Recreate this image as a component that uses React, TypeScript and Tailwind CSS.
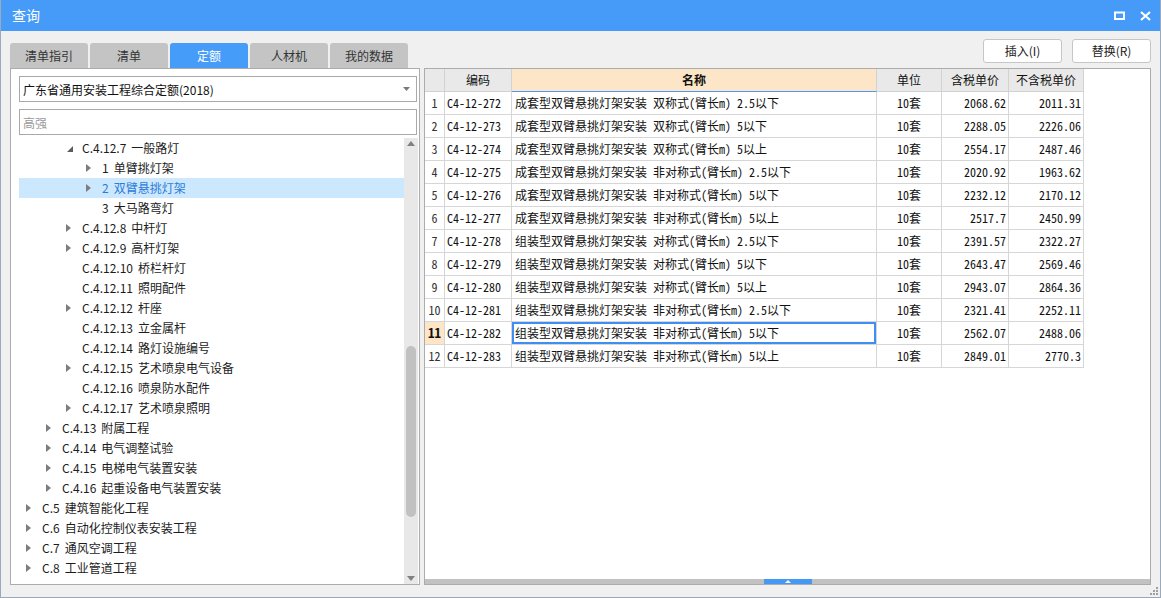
import React from 'react';

type Node = { l: 2 | 3 | 4 | 5; a?: 'open' | 'closed'; t: string; sel?: boolean };

const tree: Node[] = [
  { l: 4, a: 'open', t: 'C.4.12.7 一般路灯' },
  { l: 5, a: 'closed', t: '1 单臂挑灯架' },
  { l: 5, a: 'closed', t: '2 双臂悬挑灯架', sel: true },
  { l: 5, t: '3 大马路弯灯' },
  { l: 4, a: 'closed', t: 'C.4.12.8 中杆灯' },
  { l: 4, a: 'closed', t: 'C.4.12.9 高杆灯架' },
  { l: 4, t: 'C.4.12.10 桥栏杆灯' },
  { l: 4, t: 'C.4.12.11 照明配件' },
  { l: 4, a: 'closed', t: 'C.4.12.12 杆座' },
  { l: 4, t: 'C.4.12.13 立金属杆' },
  { l: 4, t: 'C.4.12.14 路灯设施编号' },
  { l: 4, a: 'closed', t: 'C.4.12.15 艺术喷泉电气设备' },
  { l: 4, t: 'C.4.12.16 喷泉防水配件' },
  { l: 4, a: 'closed', t: 'C.4.12.17 艺术喷泉照明' },
  { l: 3, a: 'closed', t: 'C.4.13 附属工程' },
  { l: 3, a: 'closed', t: 'C.4.14 电气调整试验' },
  { l: 3, a: 'closed', t: 'C.4.15 电梯电气装置安装' },
  { l: 3, a: 'closed', t: 'C.4.16 起重设备电气装置安装' },
  { l: 2, a: 'closed', t: 'C.5 建筑智能化工程' },
  { l: 2, a: 'closed', t: 'C.6 自动化控制仪表安装工程' },
  { l: 2, a: 'closed', t: 'C.7 通风空调工程' },
  { l: 2, a: 'closed', t: 'C.8 工业管道工程' },
];

const indent: Record<number, string> = {
  2: 'pl-[7px]',
  3: 'pl-[27px]',
  4: 'pl-[47px]',
  5: 'pl-[67px]',
};

const rows = [
  ['C4-12-272', '成套型双臂悬挑灯架安装 双称式(臂长m) 2.5以下', '2068.62', '2011.31'],
  ['C4-12-273', '成套型双臂悬挑灯架安装 双称式(臂长m) 5以下', '2288.05', '2226.06'],
  ['C4-12-274', '成套型双臂悬挑灯架安装 双称式(臂长m) 5以上', '2554.17', '2487.46'],
  ['C4-12-275', '成套型双臂悬挑灯架安装 非对称式(臂长m) 2.5以下', '2020.92', '1963.62'],
  ['C4-12-276', '成套型双臂悬挑灯架安装 非对称式(臂长m) 5以下', '2232.12', '2170.12'],
  ['C4-12-277', '成套型双臂悬挑灯架安装 非对称式(臂长m) 5以上', '2517.7', '2450.99'],
  ['C4-12-278', '组装型双臂悬挑灯架安装 对称式(臂长m) 2.5以下', '2391.57', '2322.27'],
  ['C4-12-279', '组装型双臂悬挑灯架安装 对称式(臂长m) 5以下', '2643.47', '2569.46'],
  ['C4-12-280', '组装型双臂悬挑灯架安装 对称式(臂长m) 5以上', '2943.07', '2864.36'],
  ['C4-12-281', '组装型双臂悬挑灯架安装 非对称式(臂长m) 2.5以下', '2321.41', '2252.11'],
  ['C4-12-282', '组装型双臂悬挑灯架安装 非对称式(臂长m) 5以下', '2562.07', '2488.06'],
  ['C4-12-283', '组装型双臂悬挑灯架安装 非对称式(臂长m) 5以上', '2849.01', '2770.3'],
];

const tabs = ['清单指引', '清单', '定额', '人材机', '我的数据'];

const ui = 'font-["Noto_Sans_CJK_SC","Microsoft_YaHei",sans-serif]';
const mono = 'font-["Noto_Sans_Mono_CJK_SC","Noto_Sans_CJK_SC",monospace]';

function Arrow({ kind }: { kind?: 'open' | 'closed' }) {
  if (kind === 'open')
    return (
      <svg width="6" height="6" viewBox="0 0 6 6" className="ml-[1px] mt-[2px]">
        <polygon points="6,0 6,6 0,6" fill="#5c5c5c" />
      </svg>
    );
  if (kind === 'closed')
    return (
      <svg width="5" height="8" viewBox="0 0 5 8">
        <polygon points="0,0 5,4 0,8" fill="#7d7d7d" />
      </svg>
    );
  return null;
}

function Label({ t }: { t: string }) {
  const i = t.indexOf(' ');
  return (
    <span className="text-[12px] whitespace-nowrap flex gap-[5px]">
      <span>{t.slice(0, i)}</span>
      <span>{t.slice(i + 1)}</span>
    </span>
  );
}

export default function App() {
  return (
    <div className={`w-[1161px] h-[598px] flex flex-col bg-[#f0f0f0] border border-[#9aa9bb] border-t-0 overflow-hidden relative ${ui}`}>
      {/* title bar */}
      <div className="h-[31px] bg-[#469bf8] flex items-center justify-between pl-[12px] pr-[10px] -mx-[1px]">
        <span className="text-white text-[14px]">查询</span>
        <div className="flex items-center gap-[15px]">
          <svg width="11" height="9" viewBox="0 0 11 9">
            <rect x="1" y="1.5" width="9" height="6.5" fill="none" stroke="#fff" strokeWidth="2" />
          </svg>
          <svg width="11" height="10" viewBox="0 0 11 10">
            <path d="M1 1 L10 9 M10 1 L1 9" stroke="#fff" strokeWidth="2.2" />
          </svg>
        </div>
      </div>

      <div className="flex-1 flex flex-col px-[9px] pb-[12px] min-h-0">
        {/* tabs + buttons */}
        <div className="h-[37px] flex justify-between">
          <div className="flex gap-[2px] items-end">
            {tabs.map((t) => (
              <div
                key={t}
                className={`w-[78px] h-[25px] rounded-t-[3px] flex items-center justify-center text-[12px] ${
                  t === '定额' ? 'bg-[#469cf9] text-white' : 'bg-[#c4c4c4] text-[#333]'
                }`}
              >
                {t}
              </div>
            ))}
          </div>
          <div className="flex gap-[10px] pt-[8px]">
            {['插入(I)', '替换(R)'].map((b) => (
              <div
                key={b}
                className="w-[79px] h-[24px] bg-white border border-[#c6c6c6] rounded-[3px] flex items-center justify-center text-[12px] text-[#222]"
              >
                {b}
              </div>
            ))}
          </div>
        </div>

        {/* panels */}
        <div className="flex-1 flex gap-[4px] min-h-0">
          {/* left */}
          <div className="w-[410px] bg-white border border-[#acacac] flex flex-col pt-[7px] pl-[8px] pr-[1px] min-h-0">
            <div className="h-[26px] mr-[1px] border border-[#a9a9a9] flex items-center justify-between pl-[3px] pr-[6px] text-[12px] text-[#111]">
              <span className="mt-[1px]">广东省通用安装工程综合定额(2018)</span>
              <svg width="7" height="4" viewBox="0 0 7 4">
                <polygon points="0,0 7,0 3.5,4" fill="#7a7a7a" />
              </svg>
            </div>
            <div className="h-[26px] mt-[7px] mr-[1px] border border-[#a9a9a9] flex items-center pl-[3px] text-[12px] text-[#9a9a9a]">
              <span className="mt-[1px]">高强</span>
            </div>
            <div className="flex-1 flex mt-[3px] min-h-0">
              <div className="flex-1 overflow-hidden">
                {tree.map((n) => (
                  <div
                    key={n.t}
                    className={`h-[20px] flex items-center ${indent[n.l]} ${n.sel ? 'bg-[#cce8ff] text-[#2d7bd6]' : 'text-[#1c1c1c]'}`}
                  >
                    <div className="w-[16px] flex items-center">
                      <Arrow kind={n.a} />
                    </div>
                    <Label t={n.t} />
                  </div>
                ))}
              </div>
              {/* scrollbar */}
              <div className="w-[14px] bg-[#e8e8e8] flex flex-col items-center">
                <svg width="8" height="5" viewBox="0 0 8 5" className="mt-[3px]">
                  <polygon points="0,5 8,5 4,0" fill="#808080" />
                </svg>
                <div className="mt-[200px] w-[10px] h-[171px] rounded-full bg-[#c1c1c1]" />
                <div className="flex-1" />
                <svg width="8" height="5" viewBox="0 0 8 5" className="mb-[3px]">
                  <polygon points="0,0 8,0 4,5" fill="#808080" />
                </svg>
              </div>
            </div>
          </div>

          {/* right */}
          <div className="flex-1 bg-white border border-[#acacac] flex flex-col min-h-0">
            <div className="grid grid-cols-[20px_67px_365px_65px_67px_75px] w-[659px] text-[12px] text-[#111]">
              <div className="h-[23px] bg-[#e9e9e9] border-r border-b border-[#d2d2d2]" />
              <div className="h-[23px] bg-[#e9e9e9] border-r border-b border-[#d2d2d2] flex items-center justify-center">编码</div>
              <div className="h-[23px] bg-[#fde6c8] border-r border-[#d2d2d2] border-b border-b-[#4a9af5] flex items-center justify-center font-bold">名称</div>
              <div className="h-[23px] bg-[#e9e9e9] border-r border-b border-[#d2d2d2] flex items-center justify-center">单位</div>
              <div className="h-[23px] bg-[#e9e9e9] border-r border-b border-[#d2d2d2] flex items-center justify-center">含税单价</div>
              <div className="h-[23px] bg-[#e9e9e9] border-r border-b border-[#d2d2d2] flex items-center justify-center">不含税单价</div>
              {rows.map((r, i) => {
                const active = i === 10;
                return (
                  <React.Fragment key={r[0]}>
                    <div
                      className={`h-[23px] border-r border-b border-[#d6d6d6] flex items-center justify-center ${mono} ${
                        active ? 'bg-[#fde5c6] font-bold text-[13px]' : 'text-[#333]'
                      }`}
                    >
                      {i + 1}
                    </div>
                    <div className={`h-[23px] border-r border-b border-[#d6d6d6] flex items-center pl-[2px] whitespace-nowrap ${mono}`}>{r[0]}</div>
                    <div
                      className={`h-[23px] border-r border-b border-[#d6d6d6] flex items-center pl-[3px] whitespace-nowrap ${mono} ${
                        active ? 'shadow-[inset_0_0_0_2px_#3f8ff2]' : ''
                      }`}
                    >
                      {r[1]}
                    </div>
                    <div className={`h-[23px] border-r border-b border-[#d6d6d6] flex items-center justify-center ${mono}`}>10套</div>
                    <div className={`h-[23px] border-r border-b border-[#d6d6d6] flex items-center justify-end pr-[2px] ${mono}`}>{r[2]}</div>
                    <div className={`h-[23px] border-r border-b border-[#d6d6d6] flex items-center justify-end pr-[2px] ${mono}`}>{r[3]}</div>
                  </React.Fragment>
                );
              })}
            </div>
            <div className="flex-1" />
            <div className="h-[5px] bg-[#c2c2c2] flex justify-center">
              <div className="w-[48px] h-[5px] bg-[#4499f5] flex items-center justify-center">
                <svg width="6" height="3" viewBox="0 0 6 3">
                  <polygon points="0,3 6,3 3,0" fill="#fff" />
                </svg>
              </div>
            </div>
          </div>
        </div>
      </div>

      {/* resize grip */}
      <svg width="8" height="8" viewBox="0 0 8 8" className="absolute right-[2px] bottom-[2px]">
        <rect x="6" y="0" width="2" height="2" fill="#a0a0a0" />
        <rect x="3" y="3" width="2" height="2" fill="#a0a0a0" />
        <rect x="6" y="3" width="2" height="2" fill="#a0a0a0" />
        <rect x="0" y="6" width="2" height="2" fill="#a0a0a0" />
        <rect x="3" y="6" width="2" height="2" fill="#a0a0a0" />
        <rect x="6" y="6" width="2" height="2" fill="#a0a0a0" />
      </svg>
    </div>
  );
}
